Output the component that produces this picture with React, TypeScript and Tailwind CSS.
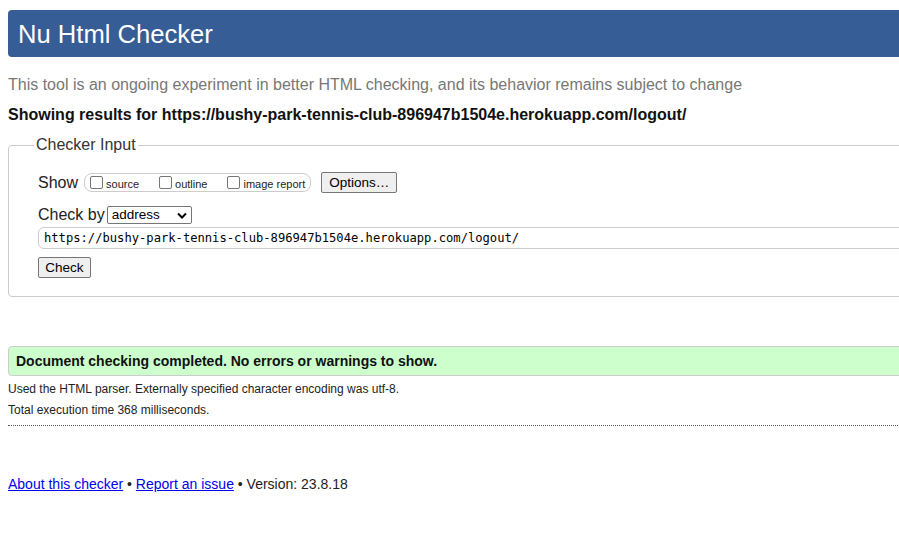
import React from "react";

function Box({ label }: { label: string }) {
  return (
    <span className="flex items-center">
      <span className="inline-block w-[13px] h-[13px] border border-[#767676] rounded-[2px] bg-white mr-[3px]" />
      <span className="text-[11px] leading-[13px] mt-[3px] text-[#222]">{label}</span>
    </span>
  );
}

export default function App() {
  return (
    <div className="w-[899px] h-[546px] overflow-hidden bg-white text-[#222]" style={{ fontFamily: '"Liberation Sans", Arial, sans-serif' }}>
      <div className="w-[1100px] pl-[8px]">
        <div className="mt-[10px] h-[47px] bg-[#365d95] rounded-[4px] flex items-center pl-[10px]">
          <h1 className="text-[25.6px] leading-[30px] text-white font-normal">Nu Html Checker</h1>
        </div>
        <p className="mt-[19px] text-[16px] leading-[18px] text-[#777]">
          This tool is an ongoing experiment in better HTML checking, and its behavior remains subject to change
        </p>
        <p className="mt-[12px] text-[16px] leading-[18px] font-bold text-[#111]">
          Showing results for https://bushy-park-tennis-club-896947b1504e.herokuapp.com/logout/
        </p>
        <fieldset className="mt-[12px] border border-[#ccc] rounded-[4px] pl-[29px] pb-[17px]">
          <legend className="-ml-[4px] px-[2px] text-[16px] leading-[18px] text-[#333]">Checker Input</legend>
          <div className="mt-[18px] flex items-center h-[21px]">
            <span className="text-[16px] leading-[18px] mr-[6px]">Show</span>
            <div className="h-[19px] border border-[#ccc] rounded-[8px] flex items-center pl-[5px] pr-[5px]">
              <Box label="source" />
              <span className="w-[20px]" />
              <Box label="outline" />
              <span className="w-[20px]" />
              <Box label="image report" />
            </div>
            <span className="ml-[10px] h-[21px] px-[7px] bg-[#efefef] border border-[#767676] rounded-[2px] text-[13.5px] leading-[19px] text-black">
              Options…
            </span>
          </div>
          <div className="mt-[13px] flex items-center h-[18px]">
            <span className="text-[16px] leading-[18px] mr-[2px]">Check by</span>
            <span className="w-[85px] h-[18px] border border-[#767676] rounded-[2px] bg-white flex items-center justify-between pl-[4px] pr-[4px] text-[13.5px] leading-[16px] text-black">
              address
              <svg width="10" height="7" viewBox="0 0 10 7">
                <path d="M1 1.5 L5 5.5 L9 1.5" stroke="#000" strokeWidth="2" fill="none" />
              </svg>
            </span>
          </div>
          <div className="mt-[3px] h-[22px] border border-[#ccc] rounded-[6px] bg-white flex items-center pl-[5px] text-[12.15px] text-black" style={{ fontFamily: '"DejaVu Sans Mono", monospace' }}>
            https://bushy-park-tennis-club-896947b1504e.herokuapp.com/logout/
          </div>
          <div className="mt-[6px]">
            <span className="inline-block h-[21px] w-[53px] text-center bg-[#efefef] border border-[#767676] rounded-[2px] text-[13.5px] leading-[19px] text-black">
              Check
            </span>
          </div>
        </fieldset>
        <div className="mt-[49px] h-[30px] bg-[#ccffcc] border border-[#ccc] rounded-[4px] flex items-center pl-[7px]">
          <span className="text-[14px] font-bold text-[#111]">Document checking completed. No errors or warnings to show.</span>
        </div>
        <p className="mt-[6px] text-[12px] leading-[14px] text-[#222]">Used the HTML parser. Externally specified character encoding was utf-8.</p>
        <p className="mt-[7px] text-[12px] leading-[14px] text-[#222]">Total execution time 368 milliseconds.</p>
        <div className="mt-[8px] border-t border-dotted border-[#555]" />
        <p className="mt-[50px] text-[14px] leading-[16px] text-[#222]">
          <a className="text-[#0000ee] underline">About this checker</a> • <a className="text-[#0000ee] underline">Report an issue</a> • Version: 23.8.18
        </p>
      </div>
    </div>
  );
}
